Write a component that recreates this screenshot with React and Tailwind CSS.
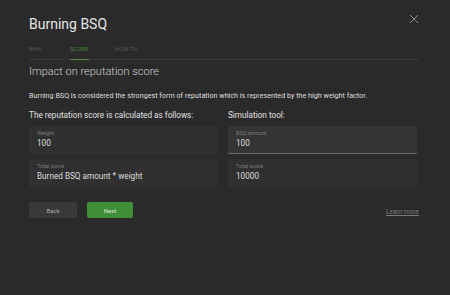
import React from "react";

const Field = ({ label, value, active }) => (
  <div
    className={`h-[28px] px-[8px] pt-[3px] rounded-[2px] ${active ? "bg-[#343434] border-b border-[#6a6a6a]" : "bg-[#303030]"}`}
  >
    <div className="text-[5.5px] leading-[8px] text-[#7a7a7a]">{label}</div>
    <div className="text-[8.2px] leading-[12px] text-[#dcdcdc]">{value}</div>
  </div>
);

export default function App() {
  return (
    <div
      className="w-[450px] h-[295px] bg-[#2a2a2a] pl-[29px] pr-[31px] overflow-hidden relative"
      style={{ fontFamily: 'Roboto, "Noto Sans", sans-serif' }}
    >
      {/* close */}
      <button className="absolute right-[31px] top-[14px] w-[10px] h-[10px] text-[#8a8a8a]" aria-label="Close">
        <svg viewBox="0 0 10 10" className="w-full h-full" fill="none" stroke="currentColor" strokeWidth="1">
          <path d="M1 1l8 8M9 1l-8 8" />
        </svg>
      </button>

      <h1 className="pt-[14px] text-[14px] leading-[20px] font-normal text-[#e6e6e6]">Burning BSQ</h1>

      {/* tabs */}
      <div className="mt-[11px] flex border-b border-[#3a3a3a] text-[5.5px] leading-[8px] uppercase tracking-[0.3px]">
        <div className="w-[41px] pb-[6px] text-[#5c5c5c]">Why</div>
        <div className="relative w-[45px] pb-[6px] text-[#4e8e3c]">
          Score
          <span className="absolute left-0 bottom-[-1px] w-[19px] h-[1.5px] bg-[#4e8e3c]" />
        </div>
        <div className="pb-[6px] text-[#5c5c5c]">How-to</div>
      </div>

      <h2 className="mt-[4px] text-[11px] leading-[16px] font-light text-[#cfcfcf]">Impact on reputation score</h2>

      <p className="mt-[10px] text-[7.2px] leading-[12px] text-[#dedede]">
        Burning BSQ is considered the strongest form of reputation which is represented by the high weight factor.
      </p>

      <div className="mt-[7px] grid grid-cols-2 gap-x-[10px] pr-[2px]">
        <div>
          <div className="text-[8.2px] leading-[12px] text-[#e0e0e0]">The reputation score is calculated as follows:</div>
          <div className="mt-[5px] flex flex-col gap-[5px]">
            <Field label="Weight" value="100" />
            <Field label="Total score" value="Burned BSQ amount * weight" />
          </div>
        </div>
        <div>
          <div className="text-[8.2px] leading-[12px] text-[#e0e0e0]">Simulation tool:</div>
          <div className="mt-[5px] flex flex-col gap-[5px]">
            <Field label="BSQ amount" value="100" active />
            <Field label="Total score" value="10000" />
          </div>
        </div>
      </div>

      <div className="mt-[15px] flex items-center">
        <button className="w-[48px] h-[16px] rounded-[2px] bg-[#393939] text-[6px] text-[#a8a8a8]">Back</button>
        <button className="ml-[10px] w-[46px] h-[16px] rounded-[2px] bg-[#3f8e38] text-[6px] text-[#d8e8d4]">Next</button>
        <a className="ml-auto mt-[5px] text-[6.5px] text-[#7a7a7a] underline">Learn more</a>
      </div>
    </div>
  );
}
